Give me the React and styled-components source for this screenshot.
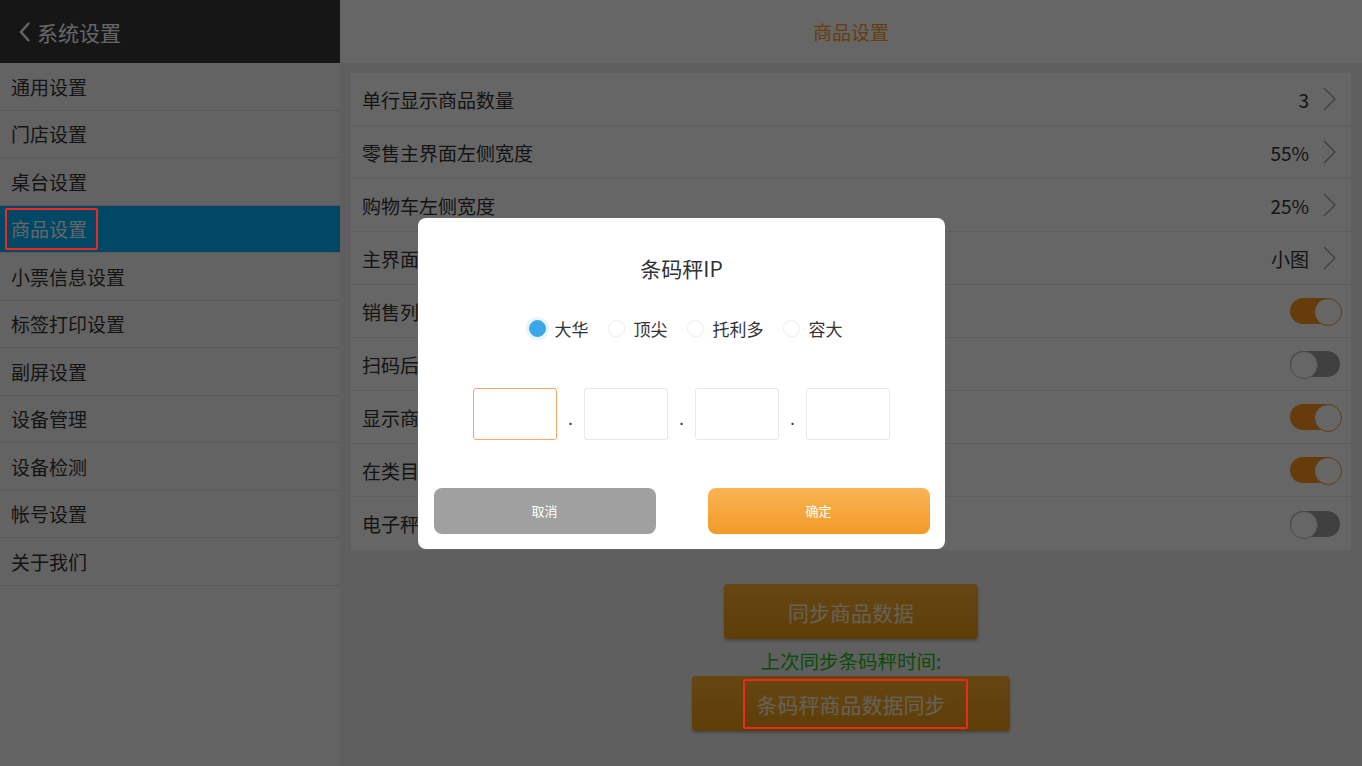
import React from "react";
import { useState } from "react";
import styled, { createGlobalStyle } from "styled-components";

const GlobalStyle = createGlobalStyle`
  html, body {
    margin: 0;
    padding: 0;
  }
  body {
    font-family: "Noto Sans CJK SC", "Noto Sans", "Liberation Sans", sans-serif;
    overflow: hidden;
  }
  * {
    box-sizing: border-box;
  }
`;

const Page = styled.div`
  display: flex;
  width: 100vw;
  height: 100vh;
  background: #eeeeee;
`;

const Sidebar = styled.div`
  width: 340px;
  flex-shrink: 0;
  display: flex;
  flex-direction: column;
  background: #f8f8f8;
`;

const SideHeader = styled.div`
  height: 63px;
  display: flex;
  align-items: center;
  gap: 6px;
  padding-left: 19px;
  background: #383838;
  color: #ffffff;
  font-size: 21px;
`;

const NavItem = styled.div`
  height: 47.5px;
  display: flex;
  align-items: center;
  padding-left: 11px;
  font-size: 19px;
  color: ${(p) => (p.$active ? "#ffffff" : "#333333")};
  background: ${(p) => (p.$active ? "#00b4ff" : "transparent")};
  border-bottom: 1px solid #e2e2e2;
`;

// red annotation frame drawn over the dimmed page
const Marked = styled.span`
  position: relative;
  display: inline-block;
  line-height: 24px;
  &::after {
    content: "";
    position: absolute;
    left: ${(p) => p.$l}px;
    right: ${(p) => p.$r}px;
    top: ${(p) => p.$t}px;
    bottom: ${(p) => p.$b}px;
    border: 2px solid #f0281e;
    border-radius: 2px;
    z-index: 30;
  }
`;

const Main = styled.div`
  flex: 1;
  display: flex;
  flex-direction: column;
`;

const TopBar = styled.div`
  height: 63px;
  display: flex;
  align-items: center;
  justify-content: center;
  background: #ffffff;
  color: #ff9a2a;
  font-size: 19px;
`;

const Panel = styled.div`
  margin: 10px 11px 0;
  background: #ffffff;
`;

const Row = styled.div`
  height: 53px;
  display: flex;
  align-items: center;
  justify-content: space-between;
  padding: 0 11px;
  border-bottom: 1px solid #e8e8e8;
  font-size: 19px;
  color: #333333;
  &:last-child {
    border-bottom: none;
  }
`;

const Value = styled.div`
  display: flex;
  align-items: center;
  gap: 14px;
  padding-right: 4px;
`;

const Toggle = styled.div`
  position: relative;
  width: 50px;
  height: 26px;
  border-radius: 13px;
  background: ${(p) => (p.$on ? "#ff9619" : "#a0a0a0")};
  &::after {
    content: "";
    position: absolute;
    top: 0;
    left: ${(p) => (p.$on ? "24px" : "0")};
    width: 26px;
    height: 26px;
    border-radius: 50%;
    background: #ffffff;
    border: 1.5px solid ${(p) => (p.$on ? "#ff9619" : "#bdbdbd")};
  }
`;

const SyncArea = styled.div`
  display: flex;
  flex-direction: column;
  align-items: center;
  margin-top: 34px;
`;

const SyncButton = styled.div`
  width: ${(p) => p.$w}px;
  height: 55px;
  display: flex;
  align-items: center;
  justify-content: center;
  border-radius: 4px;
  background: linear-gradient(#ffb22c, #ec9a14);
  color: #fff2dc;
  font-size: 21px;
  box-shadow: 0 2px 3px rgba(0, 0, 0, 0.25);
`;

const SyncLabel = styled.div`
  margin: 10px 0 3px;
  color: #18c018;
  font-size: 19.5px;
  line-height: 24px;
`;

const Overlay = styled.div`
  position: fixed;
  inset: 0;
  z-index: 10;
  background: rgba(0, 0, 0, 0.6);
  display: flex;
  align-items: center;
  justify-content: center;
`;

const Dialog = styled.div`
  width: 527px;
  height: 331px;
  background: #ffffff;
  border-radius: 8px;
  padding: 38px 15px 15px 16px;
  display: flex;
  flex-direction: column;
  align-items: center;
`;

const DialogTitle = styled.div`
  font-size: 21px;
  line-height: 24px;
  color: #333333;
`;

const RadioGroup = styled.div`
  margin-top: 37px;
  height: 24px;
  display: flex;
  align-items: center;
  gap: 19px;
  padding-left: 8px;
`;

const RadioItem = styled.div`
  display: flex;
  align-items: center;
  gap: 9px;
  font-size: 17px;
  color: #333333;
`;

const RadioDot = styled.span`
  width: 17px;
  height: 17px;
  border-radius: 50%;
  border: 1px solid ${(p) => (p.$on ? "#3aa8e8" : "#ececec")};
  background: ${(p) => (p.$on ? "#3aa8e8" : "#ffffff")};
  box-shadow: ${(p) => (p.$on ? "0 0 0 3px rgba(58, 168, 232, 0.12)" : "none")};
`;

const IpRow = styled.div`
  margin-top: 47px;
  display: flex;
  align-items: center;
`;

const IpBox = styled.input`
  width: 84px;
  height: 52px;
  border-radius: 3px;
  border: 1px solid ${(p) => (p.$focus ? "#f5a66a" : "#e8e8e8")};
  outline: none;
  background: #ffffff;
  font-size: 18px;
  text-align: center;
`;

const IpDot = styled.span`
  width: 27px;
  text-align: center;
  font-size: 16px;
  color: #333333;
  padding-top: 8px;
`;

const Actions = styled.div`
  margin-top: 48px;
  width: 100%;
  display: flex;
  justify-content: space-between;
`;

const DialogButton = styled.div`
  width: 222px;
  height: 46px;
  border-radius: 8px;
  display: flex;
  align-items: center;
  justify-content: center;
  color: #ffffff;
  font-size: 13px;
  background: ${(p) =>
    p.$primary ? "linear-gradient(#f8b454, #f39a28)" : "#a0a0a0"};
`;

function Chevron() {
  return (
    <svg width="13" height="24" viewBox="0 0 13 24">
      <polyline points="1,1 12,12 1,23" fill="none" stroke="#9a9a9a" strokeWidth="1.2" />
    </svg>
  );
}

function BackIcon() {
  return (
    <svg width="12" height="22" viewBox="0 0 12 22">
      <polyline points="10,2 2,11 10,20" fill="none" stroke="#ffffff" strokeWidth="2.4" />
    </svg>
  );
}

const navs = [
  "通用设置",
  "门店设置",
  "桌台设置",
  "商品设置",
  "小票信息设置",
  "标签打印设置",
  "副屏设置",
  "设备管理",
  "设备检测",
  "帐号设置",
  "关于我们",
];

const rows = [
  { name: "单行显示商品数量", value: "3" },
  { name: "零售主界面左侧宽度", value: "55%" },
  { name: "购物车左侧宽度", value: "25%" },
  { name: "主界面商品显示样式", value: "小图" },
  { name: "销售列表显示图片", on: true },
  { name: "扫码后自动加购", on: false },
  { name: "显示商品库存", on: true },
  { name: "在类目显示全部", on: true },
  { name: "电子秤自动加购", on: false },
];

const scales = ["大华", "顶尖", "托利多", "容大"];

export default function App() {
  const [scale, setScale] = useState(0);

  return (
    <>
      <GlobalStyle />
      <Page>
        <Sidebar>
          <SideHeader>
            <BackIcon />
            系统设置
          </SideHeader>
          {navs.map((n) => (
            <NavItem key={n} $active={n === "商品设置"}>
              {n === "商品设置" ? (
                <Marked $l={-6} $r={-11} $t={-9} $b={-9}>
                  {n}
                </Marked>
              ) : (
                n
              )}
            </NavItem>
          ))}
        </Sidebar>
        <Main>
          <TopBar>商品设置</TopBar>
          <Panel>
            {rows.map((r) => (
              <Row key={r.name}>
                <span>{r.name}</span>
                {r.value !== undefined ? (
                  <Value>
                    {r.value}
                    <Chevron />
                  </Value>
                ) : (
                  <Toggle $on={r.on} />
                )}
              </Row>
            ))}
          </Panel>
          <SyncArea>
            <SyncButton $w={254}>同步商品数据</SyncButton>
            <SyncLabel>上次同步条码秤时间:</SyncLabel>
            <SyncButton $w={318}>
              <Marked $l={-14} $r={-22} $t={-13} $b={-13}>
                条码秤商品数据同步
              </Marked>
            </SyncButton>
          </SyncArea>
        </Main>
      </Page>
      <Overlay>
        <Dialog>
          <DialogTitle>条码秤IP</DialogTitle>
          <RadioGroup>
            {scales.map((s, i) => (
              <RadioItem key={s} onClick={() => setScale(i)}>
                <RadioDot $on={scale === i} />
                {s}
              </RadioItem>
            ))}
          </RadioGroup>
          <IpRow>
            <IpBox $focus />
            <IpDot>.</IpDot>
            <IpBox />
            <IpDot>.</IpDot>
            <IpBox />
            <IpDot>.</IpDot>
            <IpBox />
          </IpRow>
          <Actions>
            <DialogButton>取消</DialogButton>
            <DialogButton $primary>确定</DialogButton>
          </Actions>
        </Dialog>
      </Overlay>
    </>
  );
}
